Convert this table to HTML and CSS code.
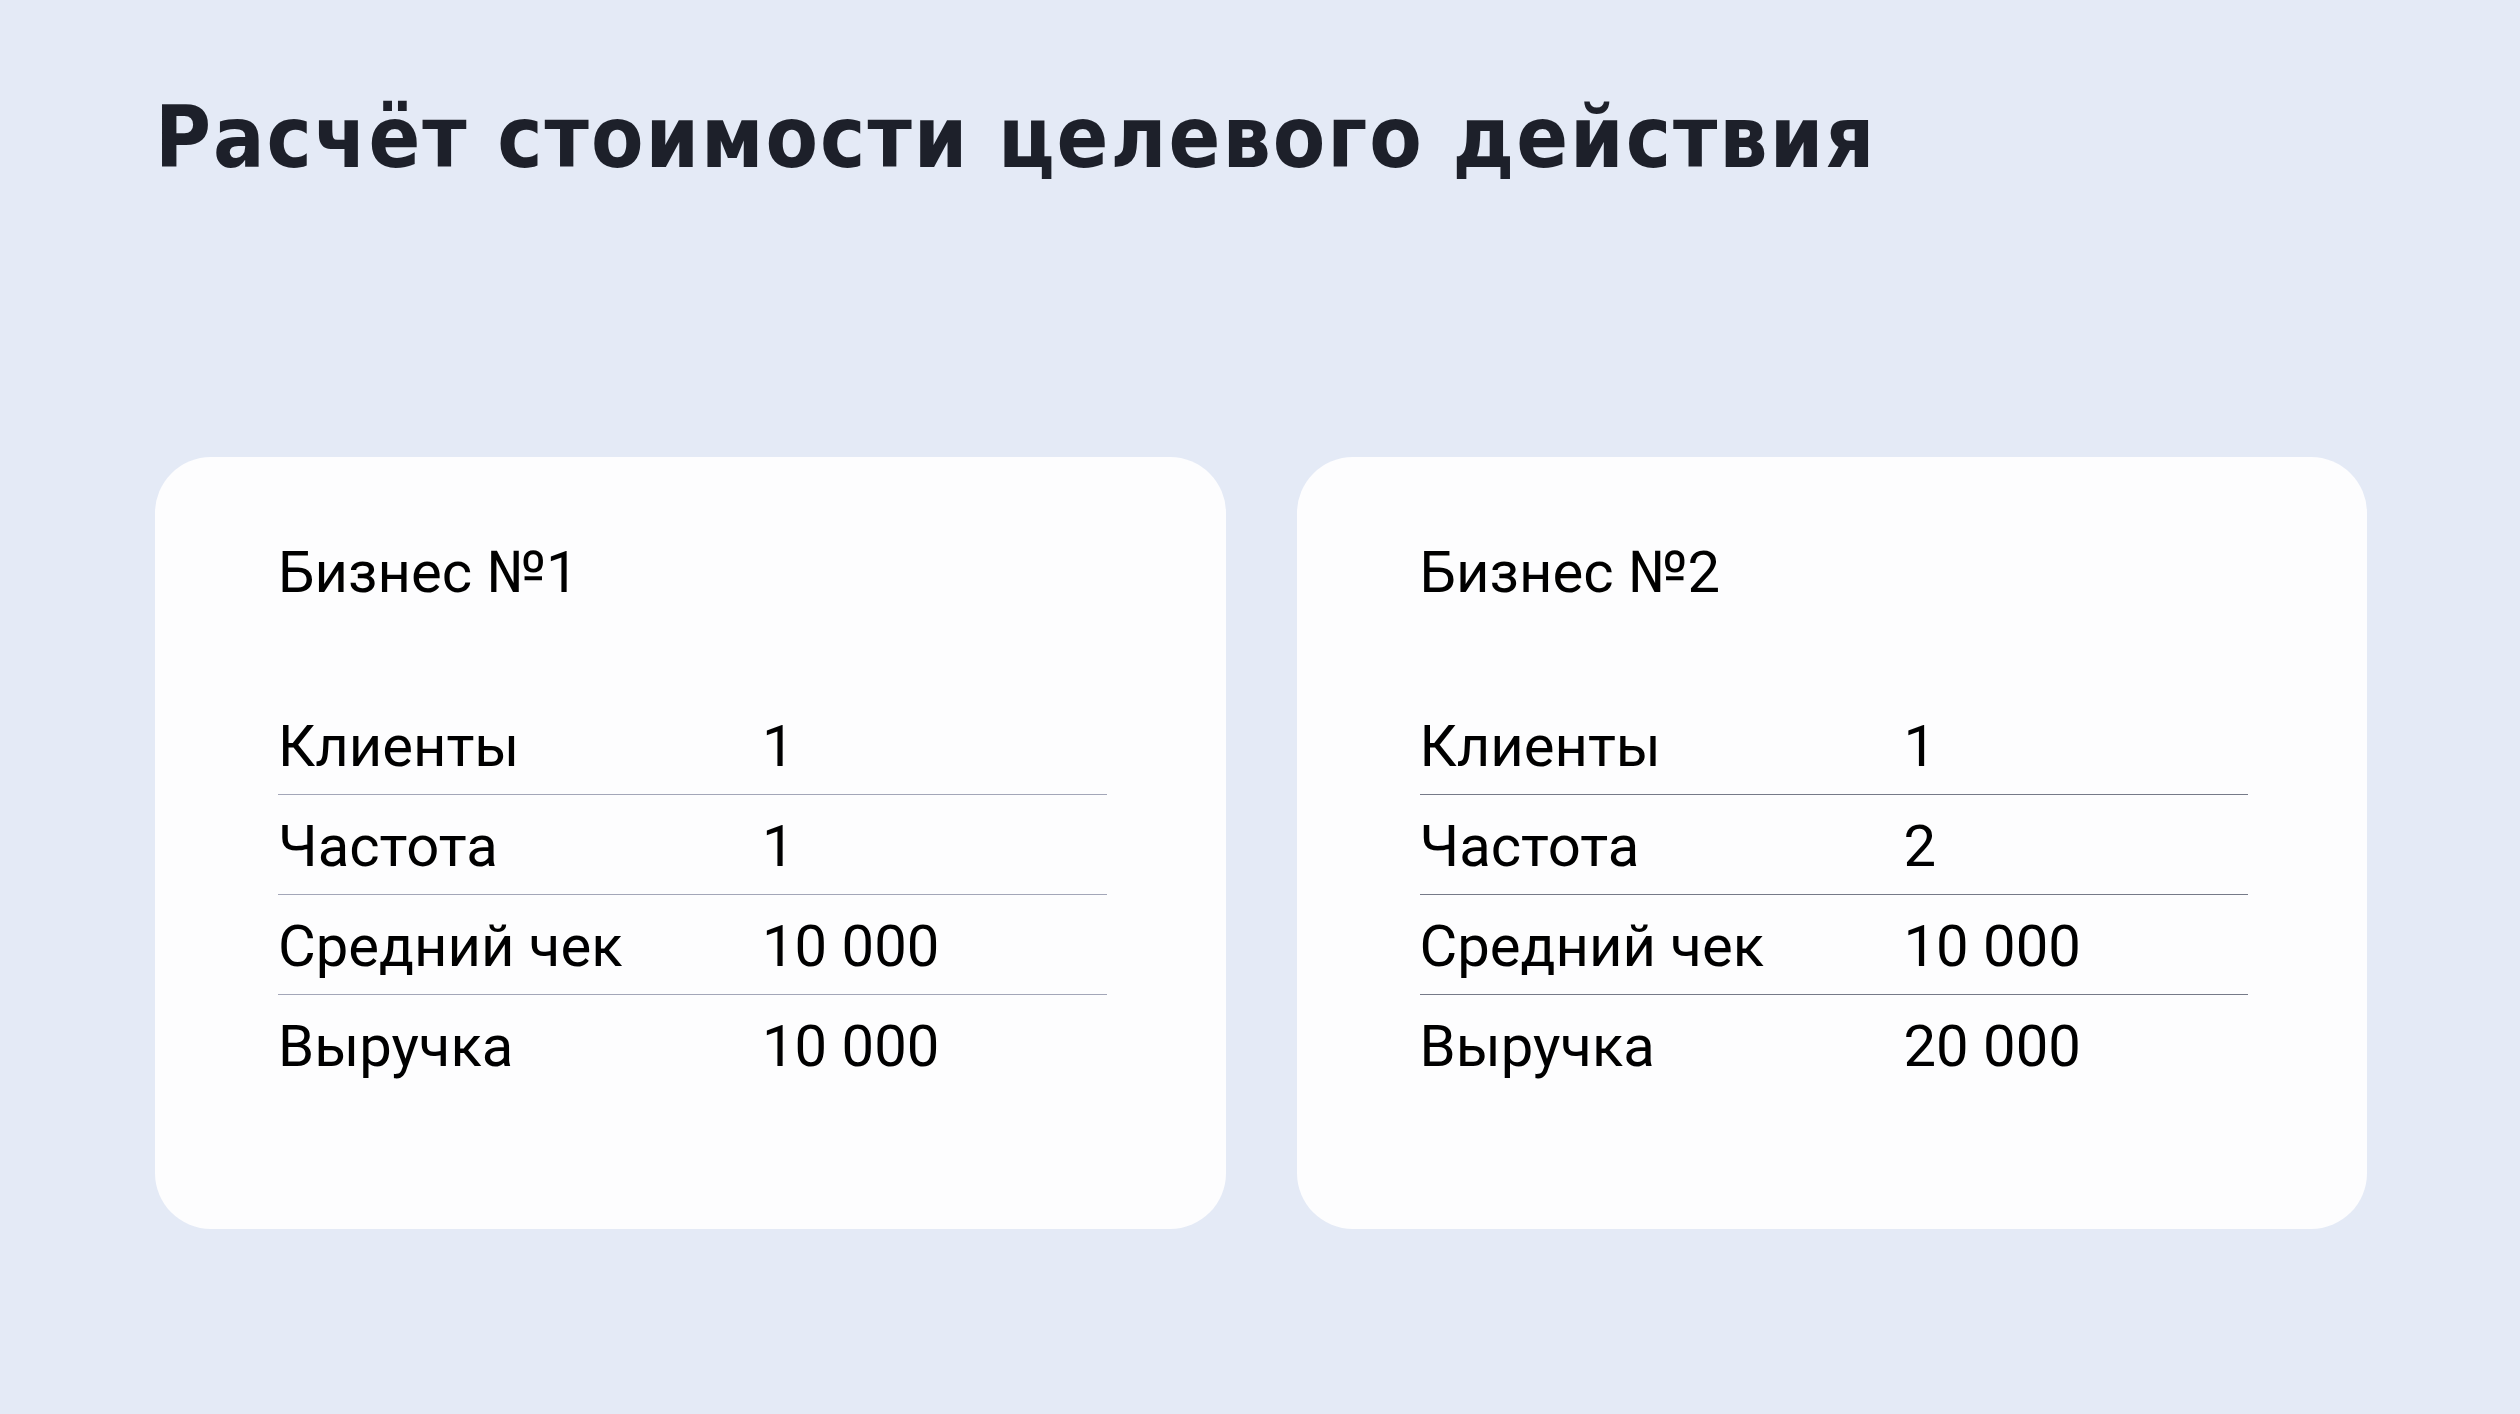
FILE: index.html
```html
<!DOCTYPE html>
<html lang="ru">
<head>
    <meta charset="UTF-8">
    <meta name="viewport" content="width=device-width, initial-scale=1.0">
    <title>Расчёт стоимости целевого действия</title>
    <link rel="stylesheet" href="styles.css">
</head>
<body>
    <main class="slide">
        <h1 class="slide-title">Расчёт стоимости целевого действия</h1>
        <div class="cards">
            <section class="card">
                <h2 class="card-title">Бизнес №1</h2>
                <div class="metrics">
                    <div class="metric-row"><span>Клиенты</span><span>1</span></div>
                    <div class="metric-row"><span>Частота</span><span>1</span></div>
                    <div class="metric-row"><span>Средний чек</span><span>10 000</span></div>
                    <div class="metric-row"><span>Выручка</span><span>10 000</span></div>
                </div>
            </section>
            <section class="card">
                <h2 class="card-title">Бизнес №2</h2>
                <div class="metrics">
                    <div class="metric-row dark"><span>Клиенты</span><span>1</span></div>
                    <div class="metric-row dark"><span>Частота</span><span>2</span></div>
                    <div class="metric-row dark"><span>Средний чек</span><span>10 000</span></div>
                    <div class="metric-row dark"><span>Выручка</span><span>20 000</span></div>
                </div>
            </section>
        </div>
    </main>
</body>
</html>
```

FILE: styles.css
```css
body {
    margin: 0;
    background-color: #e4eaf6;
    font-family: 'Roboto', 'Noto Sans', sans-serif;
    color: #000000;
}

.slide {
    padding: 95px 153px 0 155px;
}

.slide-title {
    margin: 0 0 277px 0;
    font-family: 'DejaVu Sans Condensed', 'DejaVu Sans', sans-serif;
    font-stretch: condensed;
    font-weight: 700;
    font-size: 85px;
    line-height: 1;
    color: #1d202a;
    letter-spacing: 2px;
}

.cards {
    display: flex;
    gap: 71px;
}

.card {
    flex: 1 1 0;
    height: 772px;
    box-sizing: border-box;
    padding: 81px 119px 0 123px;
    background-color: #fdfdfe;
    border-radius: 56px;
}

.card-title {
    margin: 0 0 89px 0;
    font-size: 58px;
    font-weight: 400;
    line-height: 68px;
}

.metric-row {
    display: grid;
    grid-template-columns: 484px 1fr;
    padding: 17px 0 14px 0;
    font-size: 58px;
    line-height: 68px;
    border-bottom: 1px solid #a3a6b8;
}

.metric-row.dark {
    border-bottom-color: #767a88;
}

.metric-row:last-child {
    border-bottom: none;
}
```
